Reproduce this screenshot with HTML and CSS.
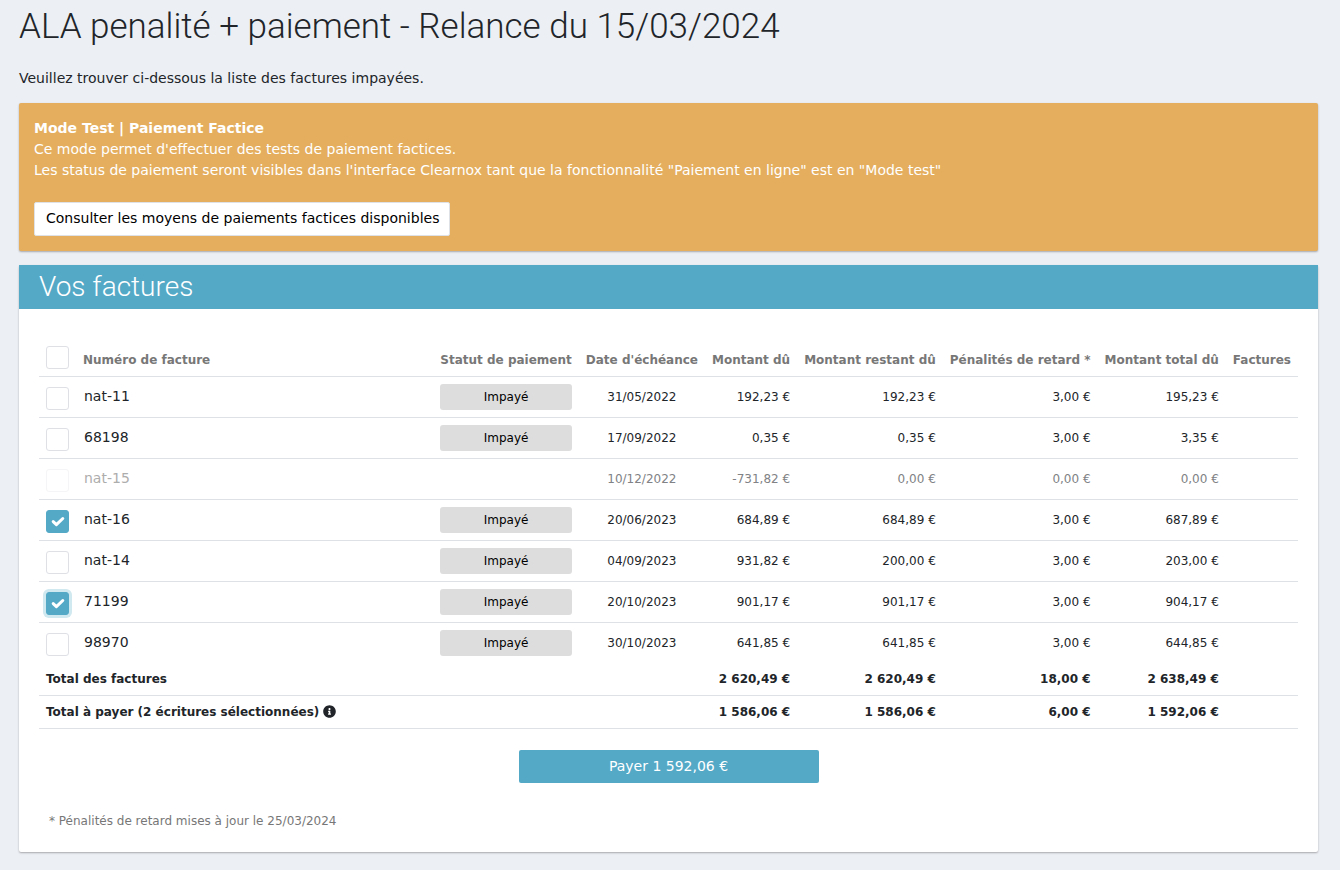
FILE: index.html
```html
<!DOCTYPE html>
<html lang="fr">
<head>
<meta charset="utf-8">
<meta name="viewport" content="width=device-width, initial-scale=1">
<title>Relance du 15/03/2024</title>
<link rel="stylesheet" href="styles.css">
</head>
<body>
<main class="page">
  <h1 class="page-title">ALA penalité + paiement - Relance du 15/03/2024</h1>
  <p class="intro">Veuillez trouver ci-dessous la liste des factures impayées.</p>

  <section class="notice">
    <p><strong>Mode Test | Paiement Factice</strong></p>
    <p>Ce mode permet d'effectuer des tests de paiement factices.</p>
    <p>Les status de paiement seront visibles dans l'interface Clearnox tant que la fonctionnalité "Paiement en ligne" est en "Mode test"</p>
    <button type="button" class="btn btn-light">Consulter les moyens de paiements factices disponibles</button>
  </section>

  <section class="card">
    <h2 class="card-title">Vos factures</h2>
    <form class="card-body">
      <table class="invoices">
        <thead>
          <tr>
            <th class="pick"><input type="checkbox" class="check" aria-label="Tout sélectionner"></th>
            <th class="number">Numéro de facture</th>
            <th>Statut de paiement</th>
            <th>Date d'échéance</th>
            <th class="amount">Montant dû</th>
            <th class="amount">Montant restant dû</th>
            <th class="amount">Pénalités de retard *</th>
            <th class="amount">Montant total dû</th>
            <th>Factures</th>
          </tr>
        </thead>
        <tbody>
          <tr>
            <td class="pick"><input type="checkbox" class="check" id="f1"></td>
            <td class="number"><label for="f1">nat-11</label></td>
            <td><span class="status">Impayé</span></td>
            <td class="date">31/05/2022</td>
            <td class="amount">192,23 €</td><td class="amount">192,23 €</td><td class="amount">3,00 €</td><td class="amount">195,23 €</td><td></td>
          </tr>
          <tr>
            <td class="pick"><input type="checkbox" class="check" id="f2"></td>
            <td class="number"><label for="f2">68198</label></td>
            <td><span class="status">Impayé</span></td>
            <td class="date">17/09/2022</td>
            <td class="amount">0,35 €</td><td class="amount">0,35 €</td><td class="amount">3,00 €</td><td class="amount">3,35 €</td><td></td>
          </tr>
          <tr class="muted">
            <td class="pick"><input type="checkbox" class="check" id="f3" disabled></td>
            <td class="number"><label for="f3">nat-15</label></td>
            <td></td>
            <td class="date">10/12/2022</td>
            <td class="amount">-731,82 €</td><td class="amount">0,00 €</td><td class="amount">0,00 €</td><td class="amount">0,00 €</td><td></td>
          </tr>
          <tr>
            <td class="pick"><span class="check-wrap"><input type="checkbox" class="check" id="f4" checked><svg class="tick" viewBox="0 0 23 23" aria-hidden="true"><path d="M7.2 11.6L10.4 14.7L16.8 8.5"/></svg></span></td>
            <td class="number"><label for="f4">nat-16</label></td>
            <td><span class="status">Impayé</span></td>
            <td class="date">20/06/2023</td>
            <td class="amount">684,89 €</td><td class="amount">684,89 €</td><td class="amount">3,00 €</td><td class="amount">687,89 €</td><td></td>
          </tr>
          <tr>
            <td class="pick"><input type="checkbox" class="check" id="f5"></td>
            <td class="number"><label for="f5">nat-14</label></td>
            <td><span class="status">Impayé</span></td>
            <td class="date">04/09/2023</td>
            <td class="amount">931,82 €</td><td class="amount">200,00 €</td><td class="amount">3,00 €</td><td class="amount">203,00 €</td><td></td>
          </tr>
          <tr>
            <td class="pick"><span class="check-wrap"><input type="checkbox" class="check is-active" id="f6" checked><svg class="tick" viewBox="0 0 23 23" aria-hidden="true"><path d="M7.2 11.6L10.4 14.7L16.8 8.5"/></svg></span></td>
            <td class="number"><label for="f6">71199</label></td>
            <td><span class="status">Impayé</span></td>
            <td class="date">20/10/2023</td>
            <td class="amount">901,17 €</td><td class="amount">901,17 €</td><td class="amount">3,00 €</td><td class="amount">904,17 €</td><td></td>
          </tr>
          <tr>
            <td class="pick"><input type="checkbox" class="check" id="f7"></td>
            <td class="number"><label for="f7">98970</label></td>
            <td><span class="status">Impayé</span></td>
            <td class="date">30/10/2023</td>
            <td class="amount">641,85 €</td><td class="amount">641,85 €</td><td class="amount">3,00 €</td><td class="amount">644,85 €</td><td></td>
          </tr>
        </tbody>
        <tfoot>
          <tr>
            <td colspan="4">Total des factures</td>
            <td class="amount">2 620,49 €</td><td class="amount">2 620,49 €</td><td class="amount">18,00 €</td><td class="amount">2 638,49 €</td><td></td>
          </tr>
          <tr>
            <td colspan="4">Total à payer (2 écritures sélectionnées) <svg class="info" viewBox="0 0 512 512" aria-hidden="true"><path d="M256 8C119.043 8 8 119.083 8 256c0 136.997 111.043 248 248 248s248-111.003 248-248C504 119.083 392.957 8 256 8zm0 110c23.196 0 42 18.804 42 42s-18.804 42-42 42-42-18.804-42-42 18.804-42 42-42zm56 254c0 6.627-5.373 12-12 12h-88c-6.627 0-12-5.373-12-12v-24c0-6.627 5.373-12 12-12h12v-64h-12c-6.627 0-12-5.373-12-12v-24c0-6.627 5.373-12 12-12h64c6.627 0 12 5.373 12 12v100h12c6.627 0 12 5.373 12 12v24z"/></svg></td>
            <td class="amount">1 586,06 €</td><td class="amount">1 586,06 €</td><td class="amount">6,00 €</td><td class="amount">1 592,06 €</td><td></td>
          </tr>
        </tfoot>
      </table>
      <button type="button" class="btn btn-primary">Payer 1 592,06 €</button>
      <p class="footnote">* Pénalités de retard mises à jour le 25/03/2024</p>
    </form>
  </section>
</main>
</body>
</html>
```

FILE: styles.css
```css
*,
*::before,
*::after {
  box-sizing: border-box;
}

body {
  margin: 0;
  background: #eceff4;
  color: #212529;
  font-family: "DejaVu Sans", sans-serif;
  font-size: 14px;
  line-height: 21px;
}

h1, h2, p {
  margin: 0;
}

.page {
  padding: 6px 22px 17px 19px;
}

.page-title {
  margin-bottom: 20px;
  font-family: Roboto, sans-serif;
  font-size: 35px;
  font-weight: 300;
  line-height: 42px;
}

.intro {
  margin-bottom: 14px;
}

.notice,
.card {
  border-radius: 2px;
  box-shadow: 0 1px 2px rgba(0, 0, 0, 0.3);
}

.notice {
  margin-bottom: 14px;
  padding: 15px;
  background: #e4ae5e;
  color: #fff;
}

.btn {
  border: 1px solid transparent;
  border-radius: 2px;
  font: inherit;
  cursor: pointer;
}

.btn-light {
  display: block;
  margin-top: 21px;
  padding: 5px 10px 6px 11px;
  border-color: #dee2e6;
  background: #fff;
  color: #000;
}

.card {
  background: #fff;
}

.card-title {
  padding: 5px 20px;
  background: #54a9c7;
  color: #fff;
  font-family: Roboto, sans-serif;
  font-size: 28px;
  font-weight: 300;
  line-height: 34px;
}

.card-body {
  display: flex;
  flex-direction: column;
  padding: 30px 20px 22px;
}

.invoices {
  width: 100%;
  border-collapse: separate;
  border-spacing: 0;
  font-size: 12px;
  line-height: 18px;
  white-space: nowrap;
}

.invoices th,
.invoices td {
  padding: 7px;
  border-bottom: 1px solid #dee2e6;
  text-align: left;
}

.invoices th {
  color: #777;
  vertical-align: bottom;
}

.invoices tbody td {
  height: 41px;
}

.invoices tbody tr:last-child td {
  height: 40px;
  border-bottom: 0;
}

.invoices tfoot {
  font-weight: 700;
}

.invoices .pick {
  vertical-align: bottom;
}

.invoices th.number {
  width: 100%;
}

.invoices td.number {
  padding: 7px 8px 9px;
  font-size: 14px;
}

.invoices .date {
  text-align: center;
}

.invoices .amount {
  text-align: right;
}

.muted {
  color: #808285;
}

.muted .number {
  color: #adadad;
}

.status {
  display: block;
  padding: 4px;
  border-radius: 3px;
  background: #ddd;
  color: #000;
  text-align: center;
}

.check {
  display: block;
  width: 23px;
  height: 23px;
  margin: 0;
  appearance: none;
  border: 1px solid #dee0e6;
  border-radius: 3px;
  background: #fff;
}

.check:disabled {
  border-color: #f5f5f7;
}

.check:checked {
  border-color: #54a9c7;
  background: #54a9c7;
}

.check.is-active {
  box-shadow: 0 0 0 3px #d0e8ef;
}

.check-wrap {
  display: grid;
  place-items: center;
}

.check-wrap > * {
  grid-area: 1 / 1;
}

.tick {
  width: 23px;
  height: 23px;
  fill: none;
  stroke: #fff;
  stroke-width: 3;
  stroke-linecap: round;
  stroke-linejoin: round;
  pointer-events: none;
}

.info {
  width: 13px;
  height: 13px;
  fill: currentColor;
  vertical-align: -2px;
}

.btn-primary {
  align-self: center;
  width: 300px;
  max-width: 100%;
  margin: 21px 0 29px;
  padding: 5px 10px;
  background: #54a9c7;
  color: #fff;
}

.footnote {
  padding: 0 10px;
  color: #777;
  font-size: 12px;
  line-height: 18px;
}
```
